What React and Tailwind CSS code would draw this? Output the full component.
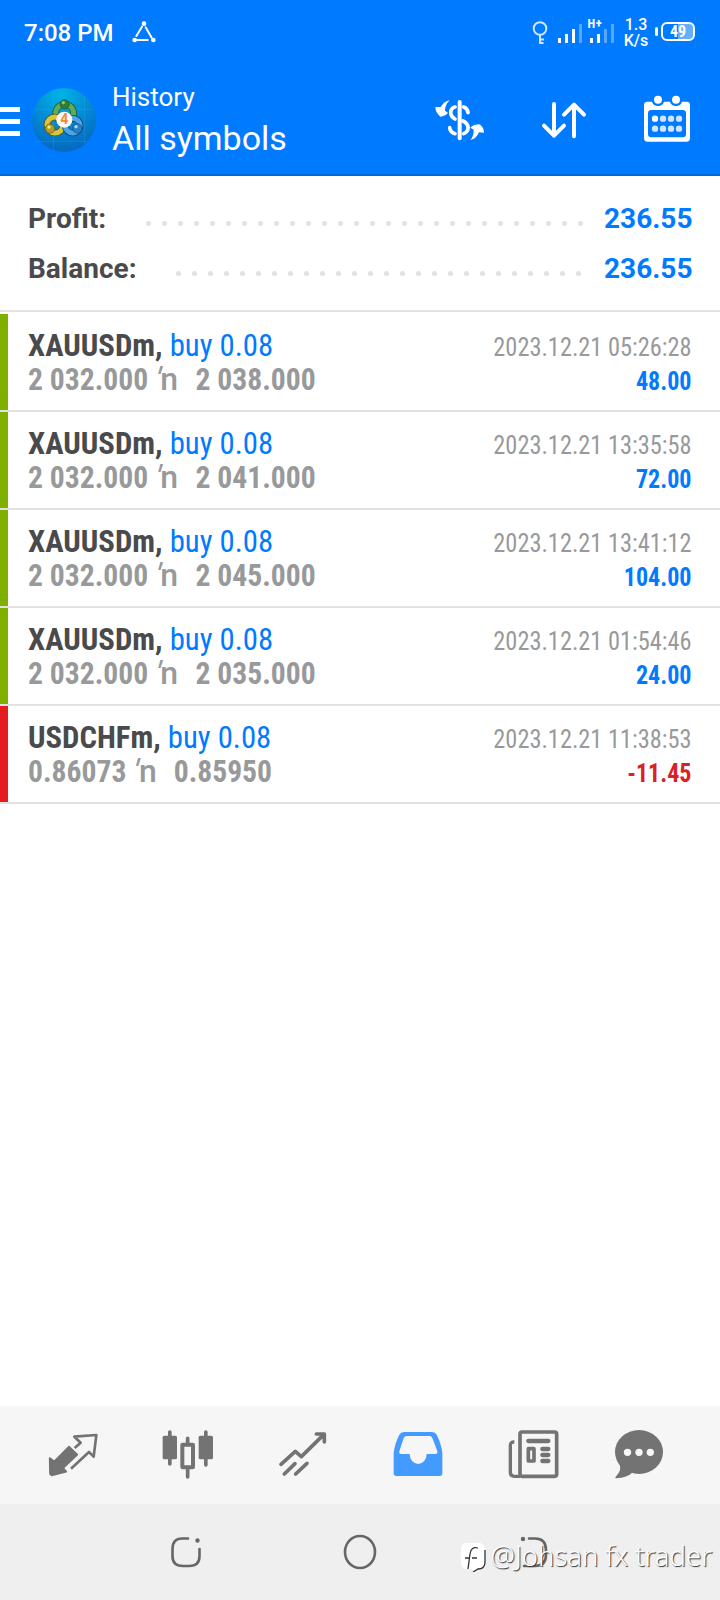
import React from 'react';

const deals = [
    { symbol: 'XAUUSDm', side: 'buy 0.08', open: '2 032.000', close: '2 038.000', time: '2023.12.21 05:26:28', profit: '48.00' },
    { symbol: 'XAUUSDm', side: 'buy 0.08', open: '2 032.000', close: '2 041.000', time: '2023.12.21 13:35:58', profit: '72.00' },
    { symbol: 'XAUUSDm', side: 'buy 0.08', open: '2 032.000', close: '2 045.000', time: '2023.12.21 13:41:12', profit: '104.00' },
    { symbol: 'XAUUSDm', side: 'buy 0.08', open: '2 032.000', close: '2 035.000', time: '2023.12.21 01:54:46', profit: '24.00' },
    { symbol: 'USDCHFm', side: 'buy 0.08', open: '0.86073', close: '0.85950', time: '2023.12.21 11:38:53', profit: '-11.45' },
];

const StatusBar = () => (
    <div className="flex h-[66px] items-center justify-between pl-6 pr-[25px] text-white">
        <div className="flex items-center gap-[18px]">
            <span className="text-2xl font-medium leading-none">7:08 PM</span>
            <svg className="mb-0.5 h-[22px] w-6" viewBox="0 0 72 66" fill="#fff" stroke="#fff" strokeWidth="6" strokeLinecap="round">
                <path d="M30 17 13 45M41 19 59 50M15 57H47" />
                <circle cx="36" cy="8" r="4" />
                <circle cx="8" cy="57" r="4" />
                <circle cx="64" cy="57" r="4" />
            </svg>
        </div>
        <div className="flex items-center">
            <svg className="mb-1.5 h-[30px] w-[84px]" viewBox="0 0 84 30" fill="#fff">
                <g fill="none" stroke="#cfe5ff" strokeWidth="2">
                    <circle cx="9" cy="13.500" r="6.300" />
                    <path d="M9 20V29M9 24.500H13M9 28H12.500" />
                </g>
                <path d="M27 23h3v5h-3zM34 19h3v9h-3zM41 14h3v14h-3zM59 23h3v5h-3zM66 19h3v9h-3z" />
                <path opacity=".35" d="M48 9h3v19h-3zM73 14h3v14h-3zM80 9h3v19h-3z" />
                <text x="56.500" y="12.500" fontSize="12.500" fontWeight="700" className="font-stretch-condensed" letterSpacing=".6">H+</text>
            </svg>
            <div className="ml-[8px] w-[26px] text-center text-base font-medium leading-4">
                <div>1.3</div>
                <div>K/s</div>
            </div>
            <div className="mb-[3px] ml-[6px] h-[9px] w-[3px] rounded-sm bg-white" />
            <div className="mb-[3px] ml-[3px] flex h-[19px] w-[34px] items-center justify-center rounded-md border-2 border-white bg-linear-to-r from-transparent from-50% to-white/40 to-50% text-base font-bold leading-none">
                <span className="mt-px font-stretch-condensed">49</span>
            </div>
        </div>
    </div>
);

const AppLogo = () => (
    <svg className="ml-3 size-16" viewBox="0 0 192 192">
        <defs>
            <radialGradient id="sky" cx=".45" cy=".1" r="1">
                <stop offset="0" stopColor="#00b4e6" />
                <stop offset=".55" stopColor="#0482d2" />
                <stop offset="1" stopColor="#0562b8" />
            </radialGradient>
        </defs>
        <circle cx="96" cy="96" r="96" fill="url(#sky)" />
        <path d="M64 6V186M158 24V168M10 64H182M10 160H168" stroke="#4bb4ea" strokeOpacity=".35" strokeWidth="2" />
        <circle cx="98" cy="76" r="27" fill="none" stroke="#1d5b3a" strokeWidth="20" />
        <circle cx="98" cy="76" r="27" fill="none" stroke="#5fae57" strokeWidth="15" />
        <circle cx="69" cy="111" r="24" fill="none" stroke="#4d5b24" strokeWidth="20" />
        <circle cx="69" cy="111" r="24" fill="none" stroke="#d8c63a" strokeWidth="15" />
        <circle cx="122" cy="113" r="22" fill="none" stroke="#0b4c86" strokeWidth="20" />
        <circle cx="122" cy="113" r="22" fill="none" stroke="#4da6e4" strokeWidth="15" />
        <circle cx="98" cy="49" r="14" fill="#2f7d3c" stroke="#1d5b3a" strokeWidth="2" />
        <circle cx="94" cy="44" r="5" fill="#84c979" />
        <circle cx="54" cy="122" r="14" fill="#b79a22" stroke="#5d5420" strokeWidth="2" />
        <circle cx="51" cy="117" r="5" fill="#f2e784" />
        <circle cx="136" cy="121" r="14" fill="#2a80c8" stroke="#0b4c86" strokeWidth="2" />
        <circle cx="132" cy="116" r="5" fill="#a4dcfa" />
        <circle cx="97" cy="95" r="24" fill="#fbfaf6" />
        <text x="97" y="109" textAnchor="middle" fontSize="42" fontWeight="700" fill="#ee8a3a">4</text>
    </svg>
);

const Header = () => (
    <header className="h-[176px] border-b-2 border-[#0068d9] bg-[#007aff] text-white">
        <StatusBar />
        <div className="flex h-[108px] items-center pr-[30px]">
            <div className="mt-0.5 flex w-5 flex-col gap-[7px]">
                <span className="h-[5px] bg-white" />
                <span className="h-[5px] bg-white" />
                <span className="h-[5px] bg-white" />
            </div>
            <AppLogo />
            <div className="ml-4 flex-1 pt-0.5">
                <div className="text-[26px] leading-[34px]">History</div>
                <div className="text-[34px] leading-[48px]">All symbols</div>
            </div>
            <svg className="h-[42px] w-[50px]" viewBox="0 0 150 126" fill="none" stroke="#fff" strokeWidth="11" strokeLinecap="round">
                <path d="M74 9V118" strokeWidth="12" />
                <path d="M86 24Q98 28 99 41M60 24C44 28 42 50 60 60M84 66C104 76 104 96 86 104M44 86Q46 100 60 104" />
                <path stroke="none" fill="#fff" d="M44 4Q28 6 17 24L1 24Q1 40 16 53Q30 52 39 42L30 35Q30 18 44 4ZM106 123Q124 120 132 100L147 101Q147 86 134 76Q116 76 106 86L116 92Q117 110 106 123Z" />
            </svg>
            <svg className="ml-[56px] h-[38px] w-[46px]" viewBox="0 0 138 114" fill="none" stroke="#fff" strokeWidth="12" strokeLinecap="round" strokeLinejoin="round">
                <path d="M39 9V104M9 74 39 104 69 74M99 106V11M69 41 99 11 129 41" />
            </svg>
            <svg className="mb-[3px] ml-[57px] h-[47px] w-[46px]" viewBox="0 0 138 141" fill="#fff">
                <path fillRule="evenodd" d="M10 20H24A19 19 0 0 0 60 20H78A19 19 0 0 0 114 20H128Q138 20 138 30V129Q138 140 128 140H10Q0 140 0 129V30Q0 20 10 20ZM22 45Q12 45 12 55V117Q12 127 22 127H116Q126 127 126 117V55Q126 45 116 45Z" />
                <circle cx="42" cy="14" r="12" />
                <circle cx="96" cy="14" r="12" />
                <circle cx="33" cy="71" r="9.500" />
                <g fill="#cfe4ff">
                    <circle cx="57" cy="71" r="9.500" />
                    <circle cx="81" cy="71" r="9.500" />
                    <circle cx="105" cy="71" r="9.500" />
                    <circle cx="33" cy="101" r="9.500" />
                    <circle cx="57" cy="101" r="9.500" />
                    <circle cx="81" cy="101" r="9.500" />
                    <circle cx="105" cy="101" r="9.500" />
                </g>
            </svg>
        </div>
    </header>
);

const Dots = ({ count }) => (
    <div className="mt-2 flex gap-[11px]">
        {Array.from({ length: count }, (_, i) => (
            <span key={i} className="size-[5px] rounded-full bg-[#e2e2e4]" />
        ))}
    </div>
);

const SummaryRow = ({ label, value, count, gap }) => (
    <div className="flex h-[50px] items-center pl-7 pr-[28px] text-[28px] font-bold">
        <span className="flex-1 text-[#4a4a4c]">{label}</span>
        <Dots count={count} />
        <span className={`${gap} w-[88px] text-right text-[#007aff]`}>{value}</span>
    </div>
);

const DealRow = ({ deal }) => {
    const loss = deal.profit.startsWith('-');
    return (
        <div className="flex h-[98px] border-b-2 border-[#e2e2e2] font-stretch-condensed">
            <div className={loss ? 'w-2 bg-[#e41e20]' : 'w-2 bg-[#7fb000]'} />
            <div className="flex flex-1 justify-between pl-5 pr-7 pt-3.5">
                <div className="text-[32px] leading-[34px]">
                    <div className="origin-left scale-x-[0.96] whitespace-nowrap">
                        <span className="font-bold text-[#4a4a4c]">{deal.symbol},</span>{' '}
                        <span className="text-[#007aff]">{deal.side}</span>
                    </div>
                    <div className="flex origin-left scale-x-[0.925] whitespace-nowrap font-bold text-[#97999b]">
                        <span>{deal.open}</span>
                        <span className="ml-2 mr-5 flex font-medium font-stretch-normal">
                            <span className="-skew-x-16">'</span>
                            <span className="origin-left scale-x-108">n</span>
                        </span>
                        <span>{deal.close}</span>
                    </div>
                </div>
                <div className="pt-0.5 text-right text-[26px] leading-[34px]">
                    <div className="origin-right scale-x-[0.937] text-[#97999b]">{deal.time}</div>
                    <div className={`origin-right scale-x-[0.925] font-bold ${loss ? 'text-[#d92223]' : 'text-[#007aff]'}`}>{deal.profit}</div>
                </div>
            </div>
        </div>
    );
};

const TabBar = () => (
    <nav className="flex h-[98px] items-center bg-[#f6f6f6] pb-1.5 pl-[15.5px] pt-1 text-[#737373] [&_svg]:size-[52px]">
        <div className="flex w-[115px] justify-center">
            <svg viewBox="0 0 156 156" fill="none" stroke="currentColor" strokeLinejoin="round">
                <path d="M66 56 91 80 49 120 58 131 14 142 9 138 8 90 22 100Z" fill="currentColor" strokeWidth="5" />
                <path d="M83 60 101 44 82 26 148 21 140 86 126 72 72 122" strokeWidth="8" />
            </svg>
        </div>
        <div className="flex w-[115px] justify-center">
            <svg viewBox="0 0 156 156" fill="currentColor" stroke="currentColor" strokeLinecap="round" strokeWidth="11">
                <rect x="2" y="23" width="43" height="71" rx="5" stroke="none" />
                <rect x="110" y="23" width="43" height="71" rx="5" stroke="none" />
                <rect x="61" y="50" width="32" height="68" rx="1" fill="none" strokeWidth="12" />
                <path d="M23.500 12V108M131.500 12V111M77 31V45M77 124V147" />
            </svg>
        </div>
        <div className="flex w-[115px] justify-center">
            <svg viewBox="0 0 156 156" fill="none" stroke="currentColor" strokeLinecap="round" strokeLinejoin="round" strokeWidth="11">
                <path d="M12 109 55 70 73 86 141 19M118 18H142V42M22 138 54 107M56 138 90 106" />
            </svg>
        </div>
        <div className="flex w-[115px] justify-center text-[#449bff]">
            <svg viewBox="0 0 156 156" fill="currentColor">
                <path fillRule="evenodd" d="M36 12H120Q130 12 134 20Q149 50 151 76V136Q151 144 143 144H13Q5 144 5 136V76Q7 50 22 20Q26 12 36 12ZM44 24Q38 24 35 30L22 70Q20 78 27 78H53A25.500 30 0 0 0 104 78H130Q138 78 136 70L121 30Q118 24 113 24Z" />
            </svg>
        </div>
        <div className="flex w-[115px] justify-center">
            <svg viewBox="0 0 156 156" fill="none" stroke="currentColor" strokeWidth="11" strokeLinecap="round">
                <rect x="39" y="12" width="110" height="133" rx="6" />
                <path d="M22 42Q10 41 10 52V133Q10 145 22 145H40" strokeWidth="10" strokeLinecap="butt" />
                <path d="M64 39H124M106 63H124M106 81H124M106 99H124" strokeWidth="13" />
                <rect x="64" y="62" width="17" height="37" rx="1" strokeWidth="11" />
            </svg>
        </div>
        <div className="flex w-[97px] justify-center">
            <svg viewBox="0 0 156 156" fill="currentColor">
                <ellipse cx="78" cy="72" rx="72" ry="66" />
                <path d="M18 106Q30 124 7 148Q6 151 10 151Q42 150 60 132Z" />
                <g fill="#f6f6f6">
                    <circle cx="43.500" cy="73" r="11" />
                    <circle cx="78" cy="73" r="11" />
                    <circle cx="112" cy="73" r="11" />
                </g>
            </svg>
        </div>
    </nav>
);

const SystemNav = () => (
    <div className="relative flex h-24 items-center bg-[#efefef] pl-[168px]">
        <svg className="size-9" viewBox="0 0 36 36" fill="none" stroke="#666" strokeWidth="2.600" strokeLinecap="round">
            <path d="M20 4.500H14Q4.500 4.500 4.500 15V22Q4.500 32 15 32H21Q31.500 32 31.500 22V15" />
            <circle cx="29.500" cy="6.500" r="1.200" fill="#666" strokeWidth="2" />
        </svg>
        <svg className="ml-[138px] size-9" viewBox="0 0 36 36" fill="none" stroke="#666" strokeWidth="2.600">
            <ellipse cx="18" cy="18" rx="15" ry="16" />
        </svg>
        <svg className="ml-[138px] size-9" viewBox="0 0 36 36" fill="none" stroke="#666" strokeWidth="2.600" strokeLinecap="round">
            <path d="M13 4.500H19Q30 4.500 30 16V21Q30 32 19 32H8" />
            <circle cx="7" cy="5" r="1.200" fill="#666" strokeWidth="2" />
        </svg>
        <div className="absolute right-[8px] top-[33px] flex items-center gap-1">
            <svg className="mt-0.5 h-[30px] w-[26px]" viewBox="0 0 26 30">
                <path d="M7 1H19Q25 1 25 8V20Q25 27 18 27L14 30 12 27H7Q1 27 1 20V8Q1 1 7 1Z" fill="#fff" />
                <path d="M25 8V20Q25 27 18 27L13 30M18 6Q11 4 10 12L8 27M5 16H9M12 16H17" fill="none" stroke="#333" strokeWidth="1.300" />
            </svg>
            <span className="whitespace-nowrap font-['Noto_Sans',sans-serif] text-[27.5px] font-light leading-[38px] text-white [text-shadow:1px_1px_1px_#333]">@Johsan fx trader</span>
        </div>
    </div>
);

const App = () => (
    <div className="flex h-[1600px] w-[720px] flex-col overflow-hidden bg-white font-[Roboto,sans-serif]">
        <Header />
        <section className="mb-0.5 h-[136px] border-b-2 border-[#e2e2e2] pt-[18px]">
            <SummaryRow label="Profit:" value="236.55" count={28} gap="ml-[21px]" />
            <SummaryRow label="Balance:" value="236.55" count={26} gap="ml-[23px]" />
        </section>
        <main className="flex-1">
            {deals.map((deal) => (
                <DealRow key={deal.time} deal={deal} />
            ))}
        </main>
        <TabBar />
        <SystemNav />
    </div>
);

export default App;
